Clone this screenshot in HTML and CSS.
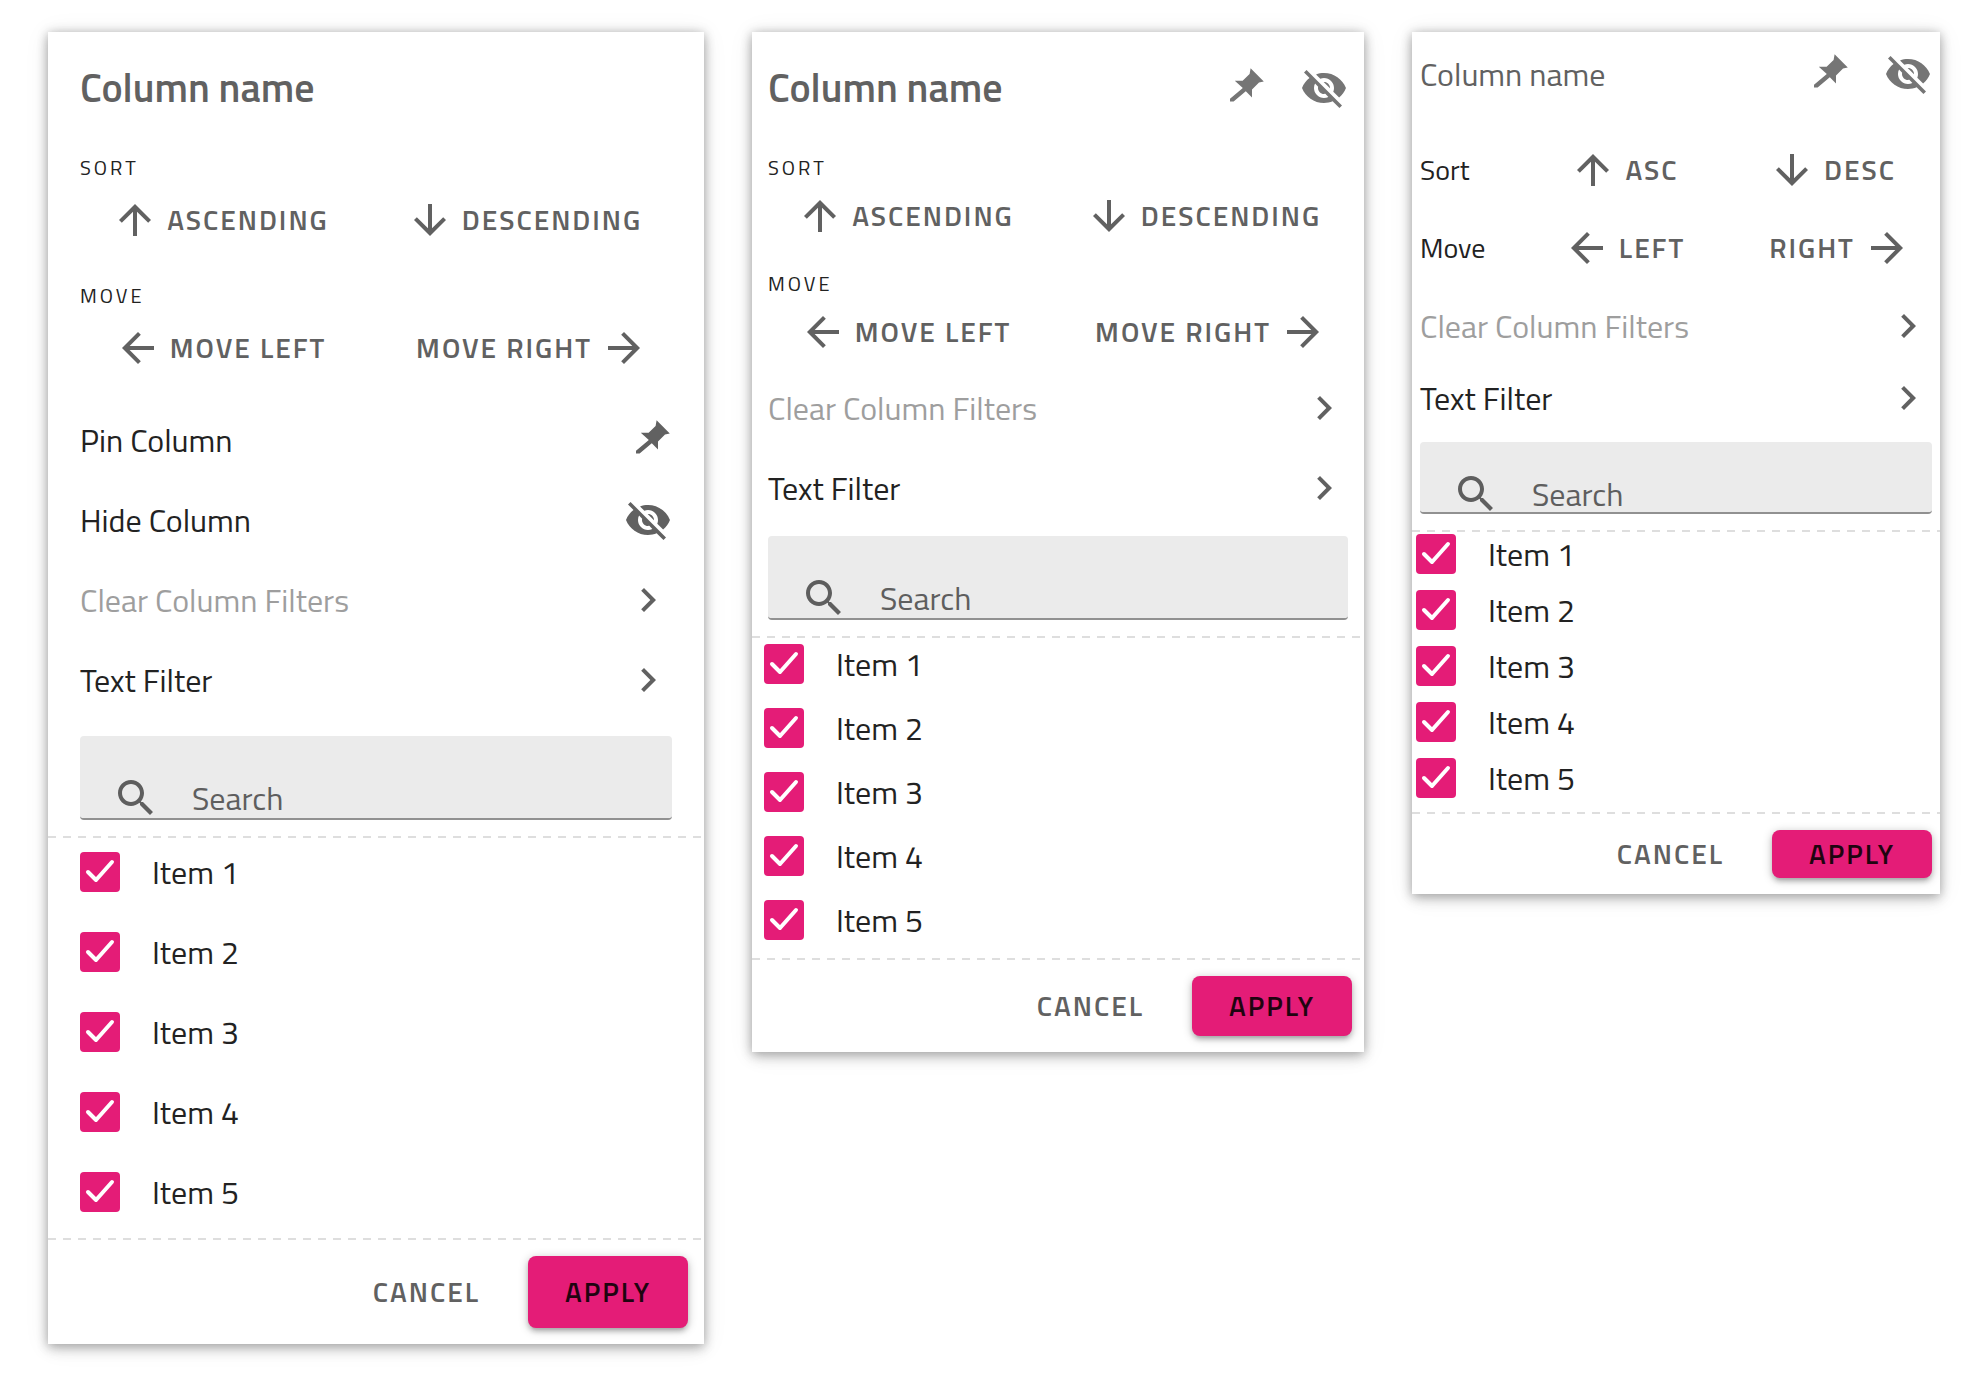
FILE: index.html
```html
<!DOCTYPE html>
<html lang="en">
<head>
<meta charset="utf-8">
<meta name="viewport" content="width=device-width, initial-scale=1">
<title>Column menu densities</title>
<link rel="stylesheet" href="styles.css">
</head>
<body>
<svg class="sprite" aria-hidden="true">
  <symbol id="up" viewBox="0 0 24 24"><path d="M4 12l1.41 1.41L11 7.83V20h2V7.83l5.58 5.59L20 12l-8-8-8 8z"/></symbol>
  <symbol id="down" viewBox="0 0 24 24"><path d="M20 12l-1.41-1.41L13 16.17V4h-2v12.17l-5.58-5.59L4 12l8 8 8-8z"/></symbol>
  <symbol id="left" viewBox="0 0 24 24"><path d="M20 11H7.83l5.59-5.59L12 4l-8 8 8 8 1.41-1.41L7.83 13H20v-2z"/></symbol>
  <symbol id="right" viewBox="0 0 24 24"><path d="M12 4l-1.41 1.41L16.17 11H4v2h12.17l-5.58 5.59L12 20l8-8z"/></symbol>
  <symbol id="chevron" viewBox="0 0 24 24"><path d="M10 6L8.59 7.41 13.17 12l-4.58 4.59L10 18l6-6z"/></symbol>
  <symbol id="pin" viewBox="0 0 24 24"><path d="M16.3 2.1L22.9 8.7L20.5 9.2L17 12.8V16.8L13.9 13.6L7.8 18.8H6V17.4L12.4 12L8.4 8.4H12.3L15.8 5z"/></symbol>
  <symbol id="hide" viewBox="0 0 24 24"><path d="M12 7c2.76 0 5 2.24 5 5 0 .65-.13 1.26-.36 1.83l2.92 2.92c1.51-1.26 2.7-2.89 3.43-4.75-1.73-4.39-6-7.5-11-7.5-1.4 0-2.74.25-3.98.7l2.16 2.16C10.74 7.13 11.35 7 12 7zM2 4.27l2.28 2.28.46.46C3.08 8.3 1.78 10.02 1 12c1.73 4.39 6 7.5 11 7.5 1.55 0 3.03-.3 4.38-.84l.42.42L19.73 22 21 20.73 3.27 3 2 4.27zM7.53 9.8l1.55 1.55c-.05.21-.08.43-.08.65 0 1.66 1.34 3 3 3 .22 0 .44-.03.65-.08l1.55 1.55c-.67.33-1.41.53-2.2.53-2.76 0-5-2.24-5-5 0-.79.2-1.53.53-2.2zm4.31-.78l3.15 3.15.02-.16c0-1.66-1.34-3-3-3l-.17.01z"/></symbol>
  <symbol id="search" viewBox="3 3 18 18"><path d="M15.5 14h-.79l-.28-.27C15.41 12.59 16 11.11 16 9.5 16 5.91 13.09 3 9.5 3S3 5.91 3 9.5 5.91 16 9.5 16c1.61 0 3.09-.59 4.23-1.57l.27.28v.79l5 4.99L20.49 19l-4.99-5zm-6 0C7.01 14 5 11.99 5 9.5S7.01 5 9.5 5 14 7.01 14 9.5 11.99 14 9.5 14z"/></symbol>
  <symbol id="check" viewBox="0 0 40 40"><path d="M8 20l8 8L32 10" fill="none" stroke="#fff" stroke-width="4" stroke-linecap="round" stroke-linejoin="round"/></symbol>
</svg>

<main class="page">
  <section class="menu comfortable">
    <header class="menu-header">
      <h2 class="title">Column name</h2>
    </header>
    <div class="group">
      <span class="label">Sort</span>
      <button class="action"><svg class="icon"><use href="#up"/></svg>Ascending</button>
      <button class="action"><svg class="icon"><use href="#down"/></svg>Descending</button>
    </div>
    <div class="group">
      <span class="label">Move</span>
      <button class="action"><svg class="icon"><use href="#left"/></svg>Move left</button>
      <button class="action trailing">Move right<svg class="icon"><use href="#right"/></svg></button>
    </div>
    <div class="rows">
      <button class="row">Pin Column<svg class="icon"><use href="#pin"/></svg></button>
      <button class="row">Hide Column<svg class="icon"><use href="#hide"/></svg></button>
      <button class="row" disabled>Clear Column Filters<svg class="icon"><use href="#chevron"/></svg></button>
      <button class="row">Text Filter<svg class="icon"><use href="#chevron"/></svg></button>
    </div>
    <label class="search">
      <svg class="search-icon"><use href="#search"/></svg>
      <input class="search-input" type="text" placeholder="Search" aria-label="Search">
    </label>
    <hr class="divider">
    <div class="items">
      <label class="item"><span class="box"><input type="checkbox" checked><svg><use href="#check"/></svg></span>Item 1</label>
      <label class="item"><span class="box"><input type="checkbox" checked><svg><use href="#check"/></svg></span>Item 2</label>
      <label class="item"><span class="box"><input type="checkbox" checked><svg><use href="#check"/></svg></span>Item 3</label>
      <label class="item"><span class="box"><input type="checkbox" checked><svg><use href="#check"/></svg></span>Item 4</label>
      <label class="item"><span class="box"><input type="checkbox" checked><svg><use href="#check"/></svg></span>Item 5</label>
    </div>
    <hr class="divider">
    <footer class="menu-footer">
      <button class="button">Cancel</button>
      <button class="button primary">Apply</button>
    </footer>
  </section>

  <section class="menu cosy">
    <header class="menu-header">
      <h2 class="title">Column name</h2>
      <button class="icon-button" aria-label="Pin column"><svg class="icon"><use href="#pin"/></svg></button>
      <button class="icon-button" aria-label="Hide column"><svg class="icon"><use href="#hide"/></svg></button>
    </header>
    <div class="group">
      <span class="label">Sort</span>
      <button class="action"><svg class="icon"><use href="#up"/></svg>Ascending</button>
      <button class="action"><svg class="icon"><use href="#down"/></svg>Descending</button>
    </div>
    <div class="group">
      <span class="label">Move</span>
      <button class="action"><svg class="icon"><use href="#left"/></svg>Move left</button>
      <button class="action trailing">Move right<svg class="icon"><use href="#right"/></svg></button>
    </div>
    <div class="rows">
      <button class="row" disabled>Clear Column Filters<svg class="icon"><use href="#chevron"/></svg></button>
      <button class="row">Text Filter<svg class="icon"><use href="#chevron"/></svg></button>
    </div>
    <label class="search">
      <svg class="search-icon"><use href="#search"/></svg>
      <input class="search-input" type="text" placeholder="Search" aria-label="Search">
    </label>
    <hr class="divider">
    <div class="items">
      <label class="item"><span class="box"><input type="checkbox" checked><svg><use href="#check"/></svg></span>Item 1</label>
      <label class="item"><span class="box"><input type="checkbox" checked><svg><use href="#check"/></svg></span>Item 2</label>
      <label class="item"><span class="box"><input type="checkbox" checked><svg><use href="#check"/></svg></span>Item 3</label>
      <label class="item"><span class="box"><input type="checkbox" checked><svg><use href="#check"/></svg></span>Item 4</label>
      <label class="item"><span class="box"><input type="checkbox" checked><svg><use href="#check"/></svg></span>Item 5</label>
    </div>
    <hr class="divider">
    <footer class="menu-footer">
      <button class="button">Cancel</button>
      <button class="button primary">Apply</button>
    </footer>
  </section>

  <section class="menu compact">
    <header class="menu-header">
      <h2 class="title">Column name</h2>
      <button class="icon-button" aria-label="Pin column"><svg class="icon"><use href="#pin"/></svg></button>
      <button class="icon-button" aria-label="Hide column"><svg class="icon"><use href="#hide"/></svg></button>
    </header>
    <div class="group">
      <span class="label">Sort</span>
      <button class="action"><svg class="icon"><use href="#up"/></svg>Asc</button>
      <button class="action"><svg class="icon"><use href="#down"/></svg>Desc</button>
    </div>
    <div class="group">
      <span class="label">Move</span>
      <button class="action"><svg class="icon"><use href="#left"/></svg>Left</button>
      <button class="action trailing">Right<svg class="icon"><use href="#right"/></svg></button>
    </div>
    <div class="rows">
      <button class="row" disabled>Clear Column Filters<svg class="icon"><use href="#chevron"/></svg></button>
      <button class="row">Text Filter<svg class="icon"><use href="#chevron"/></svg></button>
    </div>
    <label class="search">
      <svg class="search-icon"><use href="#search"/></svg>
      <input class="search-input" type="text" placeholder="Search" aria-label="Search">
    </label>
    <hr class="divider">
    <div class="items">
      <label class="item"><span class="box"><input type="checkbox" checked><svg><use href="#check"/></svg></span>Item 1</label>
      <label class="item"><span class="box"><input type="checkbox" checked><svg><use href="#check"/></svg></span>Item 2</label>
      <label class="item"><span class="box"><input type="checkbox" checked><svg><use href="#check"/></svg></span>Item 3</label>
      <label class="item"><span class="box"><input type="checkbox" checked><svg><use href="#check"/></svg></span>Item 4</label>
      <label class="item"><span class="box"><input type="checkbox" checked><svg><use href="#check"/></svg></span>Item 5</label>
    </div>
    <hr class="divider">
    <footer class="menu-footer">
      <button class="button">Cancel</button>
      <button class="button primary">Apply</button>
    </footer>
  </section>
</main>
</body>
</html>
```
FILE: styles.css
```css
*,
*::before,
*::after {
  box-sizing: border-box;
}

body {
  margin: 0;
  background: #fff;
  color: #222;
  font-family: "Titillium Web", Roboto, sans-serif;
  font-size: 32px;
  line-height: 40px;
}

button,
input {
  margin: 0;
  padding: 0;
  border: 0;
  background: none;
  color: inherit;
  font: inherit;
}

svg {
  display: block;
  fill: currentColor;
}

.sprite {
  position: absolute;
  width: 0;
  height: 0;
}

.page {
  display: grid;
  grid-template-columns: 164fr 153fr 132fr;
  align-items: start;
  gap: 48px;
  padding: 32px 48px;
}

/* Density settings */
.comfortable {
  --inset: 32px;
  --list-inset: 32px;
  --footer-inset: 16px;
  --control: 72px;
  --row: 80px;
  --group-gap: 28px;
  --label-gap: 4px;
  --rows-gap: 16px;
  --item-gap: 40px;
  --list-padding: 14px 0 26px;
}

.cosy {
  --inset: 16px;
  --list-inset: 12px;
  --footer-inset: 12px;
  --control: 60px;
  --row: 80px;
  --group-gap: 26px;
  --label-gap: 6px;
  --rows-gap: 6px;
  --item-gap: 24px;
  --list-padding: 6px 0 18px;
}

.compact {
  --inset: 8px;
  --list-inset: 4px;
  --footer-inset: 8px;
  --control: 48px;
  --row: 72px;
  --group-gap: 30px;
  --label-gap: 0px;
  --rows-gap: 18px;
  --item-gap: 16px;
  --list-padding: 2px 0 14px;
}

.menu {
  background: #fff;
  box-shadow:
    0 1px 10px rgba(0, 0, 0, 0.26),
    0 6px 12px rgba(0, 0, 0, 0.14),
    0 2px 24px rgba(0, 0, 0, 0.08);
}

.menu-header {
  display: flex;
  align-items: center;
  gap: 34px;
  padding: 32px var(--inset) 44px;
}

.compact .menu-header {
  padding-top: 18px;
  padding-bottom: 48px;
}

.title {
  flex: 1;
  margin: 0;
  color: #616161;
  font-size: 40px;
  font-weight: 600;
  line-height: 48px;
}

.compact .title {
  font-size: 32px;
  font-weight: 400;
}

.icon {
  flex: none;
  width: 48px;
  height: 48px;
  color: #616161;
}

.icon-button .icon {
  color: #757575;
}

.group {
  display: grid;
  grid-template-columns: 1fr 1fr;
  gap: var(--label-gap) 16px;
  padding: 0 var(--inset);
}

.group + .group {
  margin-top: var(--group-gap);
}

.label {
  grid-column: 1 / -1;
  font-size: 20px;
  line-height: 24px;
  letter-spacing: 3px;
  text-transform: uppercase;
}

.compact .group {
  grid-template-columns: 96px 1fr 1fr;
  align-items: center;
}

.compact .label {
  grid-column: auto;
  font-size: 28px;
  letter-spacing: 0;
  text-transform: none;
}

.action,
.button {
  display: flex;
  align-items: center;
  justify-content: center;
  height: var(--control);
  color: #616161;
  font-size: 28px;
  font-weight: 600;
  letter-spacing: 2px;
  text-transform: uppercase;
}

.action {
  gap: 8px;
  padding-right: 8px;
}

.action.trailing {
  padding: 0 0 0 8px;
}

.rows {
  margin: var(--rows-gap) 0;
  padding: 0 var(--inset);
}

.cosy .rows,
.compact .rows {
  margin-bottom: 8px;
}

.row {
  display: flex;
  align-items: center;
  justify-content: space-between;
  width: 100%;
  height: var(--row);
}

.row:disabled {
  color: #9e9e9e;
}

.search {
  display: flex;
  gap: 38px;
  margin: 0 var(--inset) 16px;
  padding: 44px 38px 2px;
  border-bottom: 2px solid #919191;
  border-radius: 4px;
  background: #ebebeb;
  color: #5e5e5e;
}

.compact .search {
  padding-top: 34px;
  padding-bottom: 0;
}

.search-icon {
  flex: none;
  width: 36px;
  height: 36px;
}

.search-input {
  flex: 1;
  min-width: 0;
  height: 36px;
  outline: 0;
}

.search-input::placeholder {
  color: inherit;
  opacity: 1;
}

.divider {
  height: 2px;
  margin: 0;
  border: 0;
  background: repeating-linear-gradient(90deg, #dedede 0 8px, transparent 8px 15px);
}

.items {
  display: grid;
  gap: var(--item-gap);
  padding: var(--list-padding);
}

.item {
  display: flex;
  align-items: center;
  gap: 32px;
  padding-left: var(--list-inset);
}

.box {
  display: grid;
  width: 40px;
  height: 40px;
}

.box > * {
  grid-area: 1 / 1;
  width: 40px;
  height: 40px;
}

.box input {
  appearance: none;
  border: 4px solid #757575;
  border-radius: 4px;
}

.box input:checked {
  border: 0;
  background: #e41c77;
}

.box svg {
  visibility: hidden;
  pointer-events: none;
}

.box input:checked + svg {
  visibility: visible;
}

.menu-footer {
  display: flex;
  justify-content: flex-end;
  gap: 16px;
  padding: 16px var(--footer-inset);
}

.button {
  min-width: 144px;
  padding: 0 32px;
  border-radius: 8px;
}

.primary {
  min-width: 160px;
  background: #e41c77;
  color: #1f0410;
  box-shadow:
    0 2px 10px rgba(0, 0, 0, 0.26),
    0 4px 4px rgba(0, 0, 0, 0.12),
    0 6px 2px -4px rgba(0, 0, 0, 0.08);
}
```
